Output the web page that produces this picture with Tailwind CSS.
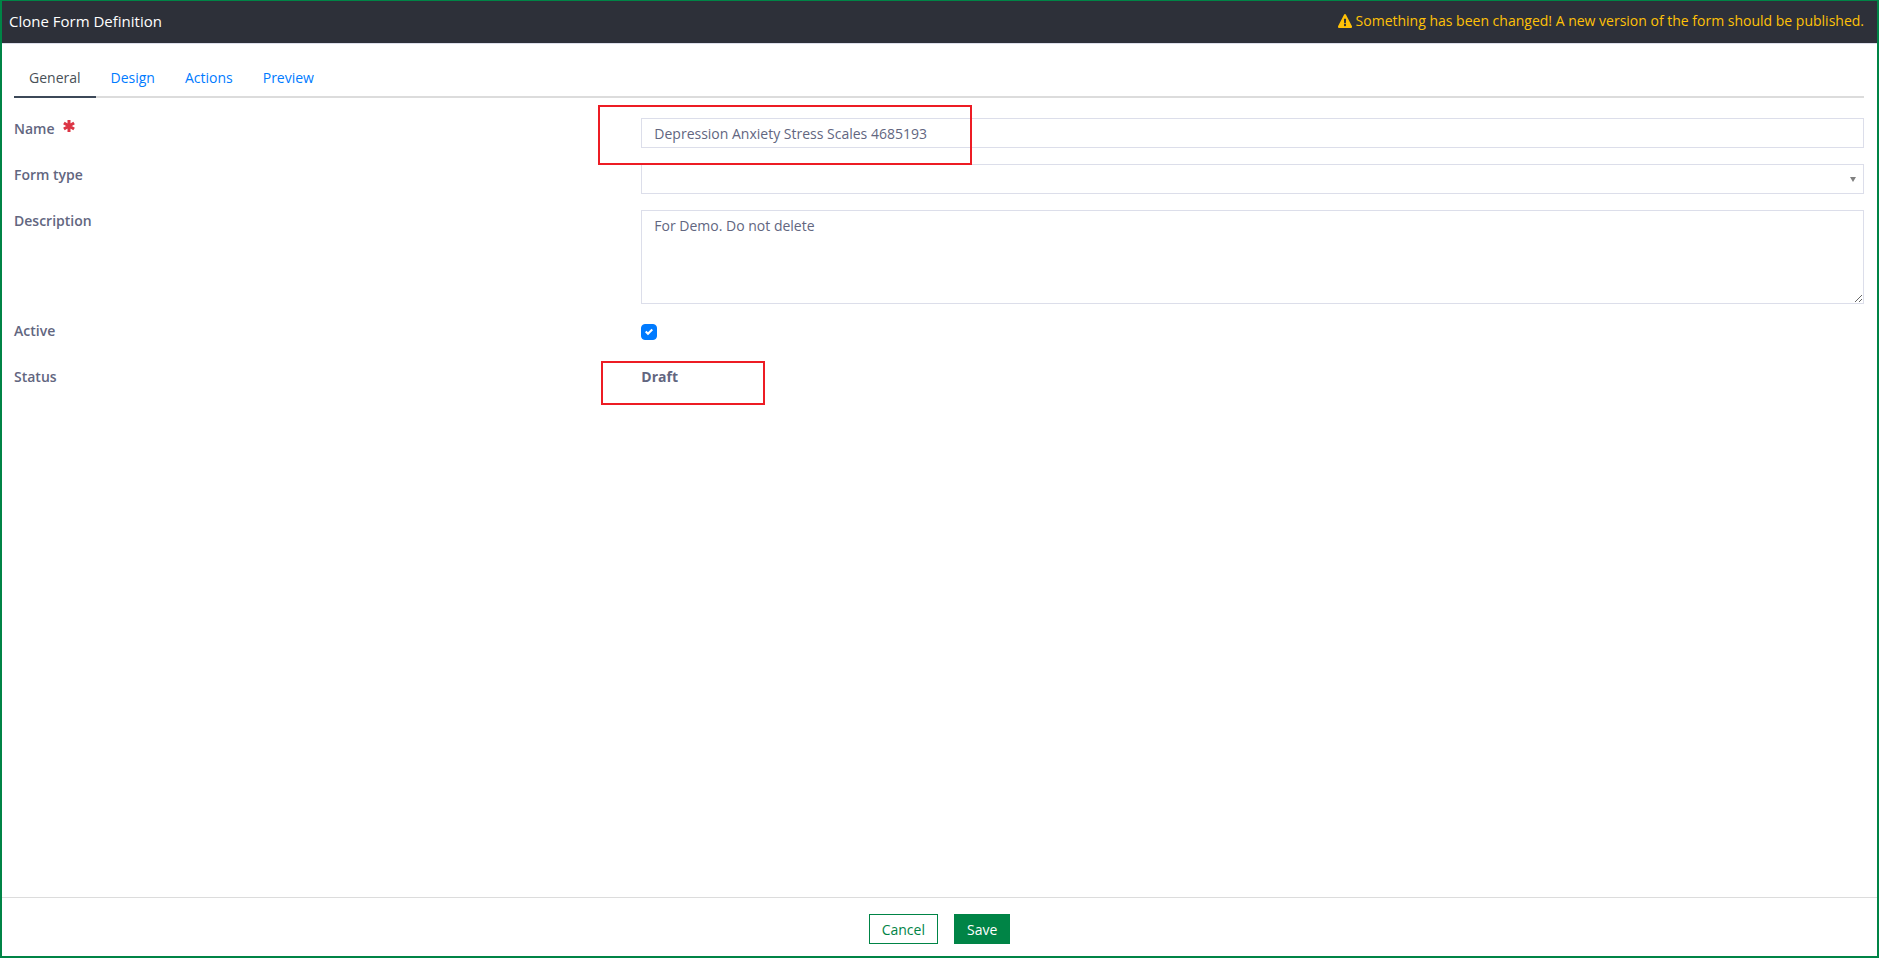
<!DOCTYPE html>
<html lang="en">
<head>
<meta charset="utf-8">
<meta name="viewport" content="width=device-width, initial-scale=1">
<title>Clone Form Definition</title>
<script src="https://cdn.jsdelivr.net/npm/@tailwindcss/browser@4"></script>
</head>
<body class="bg-white font-['Open_Sans','Noto_Sans',sans-serif] text-[14px] leading-[21px] text-[#62667f]">
<div class="flex min-h-screen flex-col border-2 border-t border-[#008446]">
  <header class="flex items-start justify-between border-b border-[#dcdeea] bg-[#2d3039] pr-[13px] pl-[7px]">
    <h1 class="pt-[9px] pb-[11px] text-[15px] leading-[22px] text-white">Clone Form Definition</h1>
    <p class="flex items-center gap-1 pt-[9px] text-[#ffc107]">
      <svg class="h-[14px] w-[14px]" viewBox="0 0 576 512" preserveAspectRatio="none" fill="currentColor" aria-hidden="true"><path d="M569.5 440C588 472 564.800 512 527.900 512H48.100C11.100 512-12 472 6.500 440L246.400 24C264.900-8 311.200-8 329.600 24L569.500 440ZM288 354a46 46 0 1 0 0 92 46 46 0 0 0 0-92ZM244.300 188.700 251.700 324.700C252.100 331 257.300 336 263.700 336H312.300C318.700 336 323.900 331 324.300 324.700L331.700 188.700C332.100 181.800 326.600 176 319.700 176H256.300C249.400 176 243.900 181.800 244.300 188.700Z"/></svg>
      <span>Something has been changed! A new version of the form should be published.</span>
    </p>
  </header>

  <main class="flex-1 pt-[14px] pr-[13px] pl-3">
    <nav class="flex border-b-2 border-[#dcdcdc]">
      <a href="#general" aria-current="page" class="-mb-[2px] border-b-2 border-[#3c4858] px-[15px] pt-[9px] pb-2 text-[#495057]">General</a>
      <a href="#design" class="px-[15px] pt-[9px] pb-2 text-[#007bff]">Design</a>
      <a href="#actions" class="px-[15px] pt-[9px] pb-2 text-[#007bff]">Actions</a>
      <a href="#preview" class="px-[15px] pt-[9px] pb-2 text-[#007bff]">Preview</a>
    </nav>

    <form id="clone-form" class="flex flex-col gap-4 pt-5">
      <div class="grid grid-cols-[1fr_2fr] gap-4">
        <label for="name" class="flex gap-2 font-semibold">Name
          <svg class="mt-[2px] h-3 w-3 text-[#dc3545]" viewBox="0 0 12 12" stroke="currentColor" stroke-width="3" aria-hidden="true"><path d="M6 0V12M.900 3 11.100 9M11.100 3 .900 9"/></svg>
        </label>
        <div class="relative">
          <input id="name" type="text" value="Depression Anxiety Stress Scales 4685193" required class="block h-[30px] w-full border border-[#dcdeea] px-3 outline-none">
          <div class="pointer-events-none absolute -top-[13px] -left-[43px] z-10 h-[60px] w-[374px] border-2 border-[#ed1c24]"></div>
        </div>
      </div>
      <div class="grid grid-cols-[1fr_2fr] gap-4">
        <label for="form-type" class="font-semibold">Form type</label>
        <div class="relative">
          <select id="form-type" class="block h-[30px] w-full appearance-none border border-[#dcdeea] bg-white px-3"><option></option></select>
          <svg class="pointer-events-none absolute top-[13px] right-2 h-[5px] w-[6px] text-[#808080]" viewBox="0 0 6 5" fill="currentColor" aria-hidden="true"><path d="M0 0H6L3 5Z"/></svg>
        </div>
      </div>
      <div class="grid grid-cols-[1fr_2fr] gap-4">
        <label for="description" class="font-semibold">Description</label>
        <textarea id="description" class="block h-[94px] w-full border border-[#dcdeea] px-3 py-1 outline-none">For Demo. Do not delete</textarea>
      </div>
      <div class="grid min-h-[30px] grid-cols-[1fr_2fr] gap-4">
        <label for="active" class="font-semibold">Active</label>
        <div class="grid justify-start content-start pt-1">
          <input id="active" type="checkbox" checked class="col-start-1 row-start-1 h-4 w-4 appearance-none rounded border border-[#adb5bd] checked:border-[#007bff] checked:bg-[#007bff]">
          <svg class="pointer-events-none col-start-1 row-start-1 h-2 w-2 place-self-center" viewBox="0 0 8 8" aria-hidden="true"><path fill="#fff" d="M6.564.75l-3.590 3.612-1.538-1.550L0 4.260 2.974 7.250 8 2.193z"/></svg>
        </div>
      </div>
      <div class="grid min-h-[30px] grid-cols-[1fr_2fr] gap-4">
        <span class="font-semibold">Status</span>
        <div class="relative">
          <strong class="font-bold">Draft</strong>
          <div class="pointer-events-none absolute -top-[5px] -left-[40px] h-[44px] w-[164px] border-2 border-[#ed1c24]"></div>
        </div>
      </div>
    </form>
  </main>

  <footer class="flex justify-center gap-4 border-t border-[#dcdcdc] pt-4 pb-3">
    <button type="button" class="h-[30px] border border-[#008446] bg-white px-3 text-[#008446]">Cancel</button>
    <button type="submit" form="clone-form" class="h-[30px] border border-[#008446] bg-[#008446] px-3 text-white">Save</button>
  </footer>
</div>
</body>
</html>
